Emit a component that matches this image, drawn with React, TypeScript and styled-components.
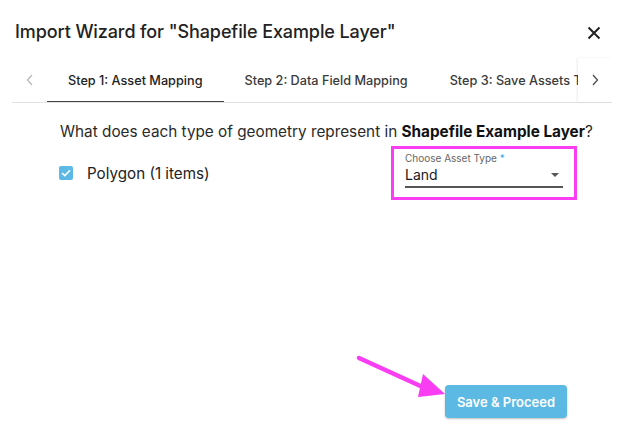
import React from 'react'
import styled, { createGlobalStyle } from 'styled-components'

const GlobalStyle = createGlobalStyle`
	html, body {
		margin: 0;
		padding: 0;
		background: #ffffff;
	}
	body {
		font-family: Inter, "Noto Sans", "Liberation Sans", sans-serif;
		color: #222;
	}
`

const tabs = ['Step 1: Asset Mapping', 'Step 2: Data Field Mapping', 'Step 3: Save Assets To Layer']

const App: React.FC = () => (
	<>
		<GlobalStyle />
		<StyledDialog>
			<StyledHeader>
				<StyledTitle>Import Wizard for "Shapefile Example Layer"</StyledTitle>
				<StyledClose aria-label="close">
					<svg width="14" height="14" viewBox="0 0 14 14">
						<path d="M1.5 1.5 L12.5 12.5 M12.5 1.5 L1.5 12.5" stroke="#222" strokeWidth="2" />
					</svg>
				</StyledClose>
			</StyledHeader>

			<StyledTabBar>
				<StyledScrollButton $disabled>
					<svg width="8" height="12" viewBox="0 0 8 12">
						<path d="M6 1 L1.5 6 L6 11" fill="none" stroke="currentColor" strokeWidth="1.2" />
					</svg>
				</StyledScrollButton>
				<StyledTabViewport>
					{tabs.map((t, i) => (
						<StyledTab key={t} $active={i === 0}>
							{t}
						</StyledTab>
					))}
				</StyledTabViewport>
				<StyledScrollButton $edge>
					<svg width="8" height="12" viewBox="0 0 8 12">
						<path d="M2 1 L6.5 6 L2 11" fill="none" stroke="currentColor" strokeWidth="1.2" />
					</svg>
				</StyledScrollButton>
			</StyledTabBar>

			<StyledContent>
				<StyledQuestion>
					What does each type of geometry represent in <b>Shapefile Example Layer</b>?
				</StyledQuestion>
				<StyledRow>
					<StyledCheckLabel>
						<StyledCheckbox>
							<svg width="10" height="8" viewBox="0 0 10 8">
								<path d="M1 4 L3.8 6.6 L9 1.2" fill="none" stroke="#fff" strokeWidth="1.6" />
							</svg>
						</StyledCheckbox>
						Polygon (1 items)
					</StyledCheckLabel>
					<StyledSelectWrap>
						<StyledSelectLabel>
							Choose Asset Type <span>*</span>
						</StyledSelectLabel>
						<StyledSelectValue>
							Land
							<StyledCaret />
						</StyledSelectValue>
					</StyledSelectWrap>
				</StyledRow>
			</StyledContent>

			<StyledActions>
				<StyledButton>Save &amp; Proceed</StyledButton>
			</StyledActions>

			<StyledArrow width="100" height="50" viewBox="0 0 100 50">
				<path d="M2 2 L70 33" stroke="#f83df2" strokeWidth="4.5" strokeLinecap="round" />
				<path d="M66 18 L88 38 L61 41 Z" fill="#f83df2" />
			</StyledArrow>
		</StyledDialog>
	</>
)

const StyledDialog = styled.div`
	position: relative;
	display: flex;
	flex-direction: column;
	width: 627px;
	height: 435px;
	box-sizing: border-box;
	overflow: hidden;
`

const StyledHeader = styled.div`
	display: flex;
	align-items: center;
	justify-content: space-between;
	padding: 20px 26px 0 15px;
	height: 24px;
`

const StyledTitle = styled.h2`
	margin: 0;
	font-size: 18px;
	font-weight: 500;
	line-height: 24px;
	color: #222;
	letter-spacing: -0.1px;
`

const StyledClose = styled.button`
	border: 0;
	background: none;
	padding: 0;
	display: flex;
	margin-top: 2px;
`

const StyledTabBar = styled.div`
	display: flex;
	margin: 14px 15px 0 12px;
	height: 44px;
	border-bottom: 1px solid #e3e3e3;
`

const StyledScrollButton = styled.div<{ $disabled?: boolean; $edge?: boolean }>`
	flex: 0 0 ${(p) => (p.$edge ? 34 : 35)}px;
	display: flex;
	align-items: center;
	justify-content: center;
	color: ${(p) => (p.$disabled ? '#b5b5b5' : '#444')};
	box-shadow: ${(p) => (p.$edge ? '-1px 0 2px rgba(0,0,0,0.08)' : 'none')};
	z-index: 1;
`

const StyledTabViewport = styled.div`
	flex: 1;
	display: flex;
	overflow: hidden;
	white-space: nowrap;
`

const StyledTab = styled.div<{ $active?: boolean }>`
	position: relative;
	flex: 0 0 auto;
	display: flex;
	align-items: center;
	padding: 0 21px 0 21px;
	font-size: 12.7px;
	font-weight: 500;
	color: ${(p) => (p.$active ? '#222' : '#3a3a3a')};

	&::after {
		content: '';
		display: ${(p) => (p.$active ? 'block' : 'none')};
		position: absolute;
		left: 0;
		right: 0;
		bottom: -1px;
		height: 2px;
		background: #444;
	}
`

const StyledContent = styled.div`
	padding: 18px 0 0 59px;
`

const StyledQuestion = styled.p`
	margin: 0 0 0 1px;
	font-size: 15.3px;
	line-height: 22px;
	white-space: nowrap;
	color: #2a2a2a;

	b {
		font-weight: 700;
		color: #111;
	}
`

const StyledRow = styled.div`
	display: flex;
	align-items: center;
	justify-content: space-between;
	margin-top: 3px;
	padding-right: 50px;
`

const StyledCheckLabel = styled.label`
	display: flex;
	align-items: center;
	gap: 14px;
	font-size: 15.2px;
	color: #222;
`

const StyledCheckbox = styled.span`
	width: 14px;
	height: 14px;
	border-radius: 2px;
	background: #5cb9e6;
	display: flex;
	align-items: center;
	justify-content: center;
`

const StyledSelectWrap = styled.div`
	width: 186px;
	height: 54px;
	box-sizing: border-box;
	border: 3px solid #fb3ef4;
	padding: 2px 11px 0 11px;
`

const StyledSelectLabel = styled.div`
	font-size: 10px;
	line-height: 14px;
	color: #666;

	span {
		color: #4aa8e0;
	}
`

const StyledSelectValue = styled.div`
	display: flex;
	align-items: center;
	justify-content: space-between;
	font-size: 14px;
	line-height: 19px;
	color: #1a1a1a;
	padding: 0 0 2px;
	border-bottom: 2px solid #555;
`

const StyledCaret = styled.span`
	width: 0;
	height: 0;
	margin-right: 4px;
	border-left: 4.5px solid transparent;
	border-right: 4.5px solid transparent;
	border-top: 4.5px solid #555;
`

const StyledActions = styled.div`
	margin-top: auto;
	display: flex;
	justify-content: flex-end;
	padding: 0 60px 17px 0;
`

const StyledButton = styled.button`
	width: 122px;
	height: 33px;
	border: 0;
	border-radius: 4px;
	background: #5cb9e4;
	color: #fff;
	font-family: Inter, "Liberation Sans", sans-serif;
	font-size: 13px;
	font-weight: 600;
	box-shadow: 0 1px 2px rgba(0, 0, 0, 0.25);
`

const StyledArrow = styled.svg`
	position: absolute;
	left: 357px;
	top: 356px;
	overflow: visible;
`

export default App
